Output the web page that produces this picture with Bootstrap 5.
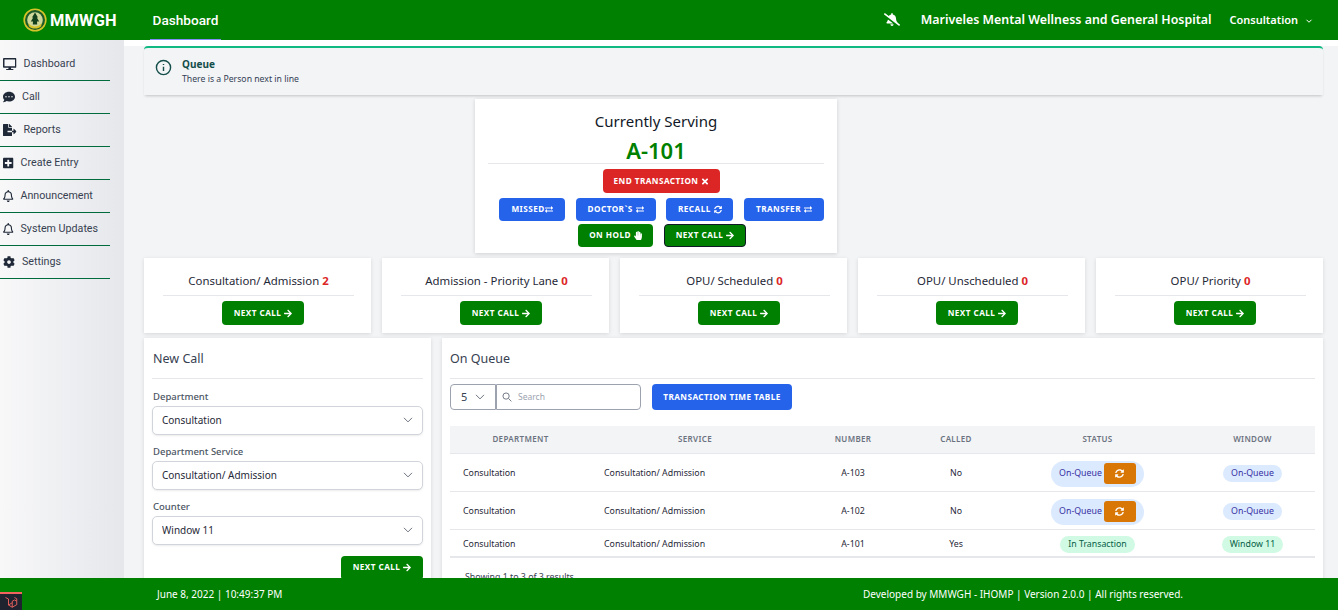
<!DOCTYPE html>
<html lang="en">
<head>
<meta charset="utf-8">
<title>MMWGH Queue</title>
<link rel="stylesheet" href="https://cdn.jsdelivr.net/npm/bootstrap@5.3.0/dist/css/bootstrap.min.css">
<style>
html,body{height:610px;overflow:hidden}
body{font-family:"Noto Sans","Open Sans",sans-serif;background:#fff;color:#111827;font-size:12px}
.topbar{height:40px;background:#008000;padding:0;flex:none;color:#fff;flex-wrap:nowrap}
.brandbox{display:flex;align-items:center;margin-left:23px;width:127px;gap:3px;font:700 16.4px Roboto,sans-serif;letter-spacing:.2px;color:#fff}
.toptab{font:500 13.6px Roboto,sans-serif;color:#fff;height:40px;width:71px;display:flex;align-items:center;justify-content:center;border-bottom:1px solid #818cf8;text-decoration:none}
.tophosp{font-weight:600;font-size:12.4px;margin-right:18px}
.topdept{font-weight:600;font-size:11px;margin-right:25px}
.bodywrap{flex:1 1 0;min-height:0}
.sideb{width:124px;flex:none;background:linear-gradient(to right,#f8f8f9,#e5e7eb);padding-top:8px;font-family:Roboto,sans-serif;font-size:10.7px;color:#374151}
.sideitem{display:flex;align-items:center;height:33px;width:110px;border-bottom:1px solid #006b3c;color:#374151;text-decoration:none;padding-left:3px}
.sideitem svg{height:12px;flex:none;fill:#1f2937}
.iw13{width:13.5px}.iw12{width:12px}.iw10{width:10.5px}
.sideitem span{margin-left:7px}
.mainarea{flex:1 1 0;min-width:0;background:linear-gradient(#fff 6px,#f3f4f6 6px);padding:6px 15px 0 20px;overflow:hidden}
.queuealert{height:49px;background:#f3f4f6;border-top:2px solid #10b981;border-radius:4px 4px 0 0;box-shadow:0 2px 3px -1px rgba(0,0,0,.2);display:flex;align-items:center;padding:0 11px 0;margin-bottom:4px;color:#134e4a}
.queuealert svg{width:17px;height:17px;flex:none;margin:0 10px 8px 0}
.alhead{font-size:10px;font-weight:700;line-height:14px}
.alsub{font-size:8.7px;line-height:14px;margin-top:1px;color:#334155}
.servecard{width:362px;height:154px;margin-left:331px;margin-bottom:5px;background:#fff;box-shadow:0 1px 4px rgba(0,0,0,.15);padding:12px 13px 0;border:0;border-radius:0}
.servetitle{font-size:15px;line-height:20px;text-align:center;color:#111827}
.servenum{font-size:22px;line-height:29px;font-weight:600;color:#008000;text-align:center;border-bottom:1px solid #e5e7eb;height:33px;padding-top:5px;box-sizing:border-box}
.actbtn{display:inline-flex;align-items:center;justify-content:center;gap:3px;border:1px solid transparent;border-radius:4px;color:#fff;font-size:8.2px;font-weight:700;letter-spacing:.45px;text-transform:uppercase;height:24px;padding:0;line-height:1;white-space:nowrap}
.actbtn svg{width:8px;height:9px;fill:#fff;flex:none}
.actbtn:hover{color:#fff}
.nogap{gap:0}
.bblue{background:#2563eb}
.bgreen{background:#008000}
.bred{background:#dc2626}
.borange{background:#d97706}
.bdark{border-color:#111827}
.servrow{display:flex;justify-content:center}
.w117{width:117px}
.servrow1{margin-top:5px;padding-left:11px}
.servrow2{margin-top:5px;justify-content:flex-end;gap:10.67px}
.servrow2 .actbtn,.servrow3 .actbtn{height:23px}
.servrow3{margin-top:3px;gap:11px;padding-left:12px}
.w66{width:66px}.w80{width:80px}.w67{width:67px}.w75{width:75px}.w82{width:82px}
.quegrid{display:grid;grid-template-columns:repeat(5,227px);gap:11px;margin-bottom:5px}
.quecard{height:75px;background:#fff;box-shadow:0 1px 4px rgba(0,0,0,.12);padding:13px 17px 0 19px;border:0;border-radius:0;align-items:center}
.quename{font-size:11.4px;line-height:19px;height:25px;width:100%;text-align:center;border-bottom:1px solid #e5e7eb;color:#1f2937;white-space:nowrap}
.quename b{color:#dc2626;font-weight:700}
.quecard .actbtn{margin-top:5px;margin-left:9px}
.lowergrid{display:flex;gap:11px}
.newcard{width:287px;flex:none;height:300px;background:#fff;box-shadow:0 1px 4px rgba(0,0,0,.12);padding:0 8px;border:0;border-radius:0}
.oncard{flex:1 1 0;min-width:0;height:300px;background:#fff;box-shadow:0 1px 4px rgba(0,0,0,.12);padding:0 8px;border:0;border-radius:0}
.cardhd{height:41px;line-height:41px;font-size:12.5px;color:#374151;border-bottom:1px solid #e5e7eb;padding-left:1px}
.oncard .cardhd{padding-left:0}
.fldlabel{font-size:9.5px;font-weight:500;color:#4b5563;line-height:13px;margin:11px 0 3px;padding-left:1px;display:block}
.fldlabel.tight{margin-top:10.5px}
.form-select.fldsel,.form-select.persel{background-image:url("data:image/svg+xml,%3csvg xmlns='http://www.w3.org/2000/svg' viewBox='0 0 16 16'%3e%3cpath fill='none' stroke='%236b7280' stroke-linecap='round' stroke-linejoin='round' stroke-width='1.6' d='M2 5l6 6 6-6'/%3e%3c/svg%3e")}
.fldsel.form-select{height:28.5px;font-size:10px;padding:0 9px;color:#1f2937;border-color:#d1d5db;border-radius:5px;box-shadow:0 1px 2px rgba(0,0,0,.08);background-size:10px 10px;background-position:right 9px center}
.nextwrap{display:flex;justify-content:flex-end;margin-top:11px}
.toolrow{display:flex;align-items:center;margin-top:5px;height:26px;gap:11px}
.pergrp{display:flex;width:191px;height:26px}
.persel.form-select{width:46px;height:26px;font-size:11px;padding:0 0 0 10px;border-radius:4px 0 0 4px;border-color:#9ca3af;color:#374151;background-size:10px 10px;background-position:right 10px center}
.searchbox{flex:1;display:flex;align-items:center;border:1px solid #9ca3af;border-radius:0 4px 4px 0;padding-left:5px;gap:6px;height:26px}
.searchbox svg{width:10px;height:10px;flex:none}
.searchbox input{border:0;outline:0;width:100px;font-size:8.5px;padding:0;background:transparent}
.searchbox input::placeholder{color:#9ca3af;opacity:1}
.ttbtn{width:140px;height:26px}
.qtable{width:865px;table-layout:fixed;margin:16px 0 0;font-size:8.8px;color:#1f2937;--bs-table-border-color:#e5e7eb}
.qtable th{background:#f3f4f6;height:27px;padding:0;text-align:center;font-size:8px;font-weight:600;letter-spacing:.35px;color:#6b7280;text-transform:uppercase;border-bottom:1px solid #e5e7eb;vertical-align:middle}
.qtable td{padding:3px 0 0;height:38px;vertical-align:middle;text-align:center;border-bottom:1px solid #e5e7eb;white-space:nowrap}
.qtable td.tl{text-align:left;padding-left:13px}
.qtable tr.shortrow td{height:28px;border-bottom:2px solid #e5e7eb}
.stpill{display:inline-flex;align-items:center;border-radius:999px;height:17px;padding:0 8px;font-size:8.8px;font-weight:400;line-height:1}
.stblue{background:#dbeafe;color:#3730a3}
.stgreen{background:#d1fae5;color:#065f46}
.stwrap{height:26px;padding:0 8px;gap:2px}
.syncbtn{width:32px;height:21px;border-radius:3px;display:inline-flex;align-items:center;justify-content:center;border:0;margin:0}
.syncbtn svg{width:9px;height:9px;fill:#fff}
.resulttxt{font-size:8.8px;color:#374151;padding:13px 0 0 15px;line-height:12px}
.foot{height:32px;flex:none;background:#008000;color:#fff;font-size:10px;display:flex;align-items:center;position:relative}
.footdate{margin-left:157px;width:706px}
.debugicon{position:absolute;left:0;bottom:0;width:22px;height:18px;background:#1f2330;border-top:2px solid #f4645f;display:flex;align-items:center;justify-content:center}
.debugicon svg{width:15px;height:14px}
</style>
</head>
<body class="d-flex flex-column">
<svg width="0" height="0" class="d-none">
<symbol id="i-arrow" viewBox="0 0 448 512"><path d="M190.5 66.9l22.2-22.2c9.4-9.4 24.6-9.4 33.9 0L441 239c9.4 9.4 9.4 24.6 0 33.9L246.6 467.3c-9.4 9.4-24.6 9.4-33.9 0l-22.2-22.2c-9.5-9.5-9.3-25 .4-34.3L311.4 296H24c-13.3 0-24-10.7-24-24v-32c0-13.3 10.7-24 24-24h287.4L190.9 101.2c-9.8-9.3-10-24.8-.4-34.3z"/></symbol>
<symbol id="i-times" viewBox="0 0 352 512"><path d="M242.72 256l100.07-100.07c12.28-12.28 12.28-32.19 0-44.48l-22.24-22.24c-12.28-12.28-32.19-12.28-44.48 0L176 189.28 75.93 89.21c-12.28-12.28-32.19-12.28-44.48 0L9.21 111.45c-12.28 12.28-12.28 32.19 0 44.48L109.28 256 9.21 356.07c-12.28 12.28-12.28 32.19 0 44.48l22.24 22.24c12.28 12.28 32.2 12.28 44.48 0L176 322.72l100.07 100.07c12.28 12.28 32.2 12.28 44.48 0l22.24-22.24c12.28-12.28 12.28-32.19 0-44.48L242.72 256z"/></symbol>
<symbol id="i-exch" viewBox="0 0 512 512"><path d="M0 168v-16c0-13.255 10.745-24 24-24h360V80c0-21.367 25.899-32.042 40.971-16.971l80 80c9.372 9.373 9.372 24.569 0 33.941l-80 80C409.956 271.982 384 261.456 384 240v-48H24c-13.255 0-24-10.745-24-24zm488 152H128v-48c0-21.314-25.862-32.08-40.971-16.971l-80 80c-9.372 9.373-9.372 24.569 0 33.941l80 80C102.057 463.997 128 453.437 128 432v-48h360c13.255 0 24-10.745 24-24v-16c0-13.255-10.745-24-24-24z"/></symbol>
<symbol id="i-sync" viewBox="0 0 512 512"><path d="M370.72 133.28C339.458 104.008 298.888 87.962 255.848 88c-77.458.068-144.328 53.178-162.791 126.85-1.344 5.363-6.122 9.15-11.651 9.15H24.103c-7.498 0-13.194-6.807-11.807-14.176C33.933 94.924 134.813 8 256 8c66.448 0 126.791 26.136 171.315 68.685L463.03 40.97C478.149 25.851 504 36.559 504 57.941V192c0 13.255-10.745 24-24 24H345.941c-21.382 0-32.09-25.851-16.971-40.971l41.75-41.749zM32 296h134.059c21.382 0 32.09 25.851 16.971 40.971l-41.75 41.75c31.262 29.273 71.835 45.319 114.876 45.28 77.418-.07 144.315-53.144 162.787-126.849 1.344-5.363 6.122-9.15 11.651-9.15h57.304c7.498 0 13.194 6.807 11.807 14.176C478.067 417.076 377.187 504 256 504c-66.448 0-126.791-26.136-171.315-68.685L48.97 471.03C33.851 486.149 8 475.441 8 454.059V320c0-13.255 10.745-24 24-24z"/></symbol>
<symbol id="i-hand" viewBox="0 0 448 512"><path d="M408.781 128.007C386.356 127.578 368 146.36 368 168.79V256h-8V79.79c0-22.43-18.356-41.212-40.781-40.783C297.488 39.423 280 57.169 280 79v177h-8V40.79C272 18.36 253.644-.422 231.219.007 209.488.423 192 18.169 192 40v216h-8V80.79c0-22.43-18.356-41.212-40.781-40.783C121.488 40.423 104 58.169 104 80v235.992l-31.648-43.519c-12.993-17.866-38.009-21.817-55.877-8.823-17.865 12.994-21.815 38.01-8.821 55.877l125.601 172.705A48 48 0 0 0 172.073 512h197.59c22.274 0 41.622-15.324 46.724-37.006l26.508-112.66a192.011 192.011 0 0 0 5.104-43.975V168c.001-21.831-17.487-39.577-39.218-39.993z"/></symbol>
<symbol id="i-desk" viewBox="0 0 576 512"><path d="M528 0H48C21.5 0 0 21.5 0 48v320c0 26.5 21.5 48 48 48h192l-16 48h-72c-13.3 0-24 10.7-24 24s10.7 24 24 24h272c13.3 0 24-10.7 24-24s-10.7-24-24-24h-72l-16-48h192c26.5 0 48-21.5 48-48V48c0-26.5-21.5-48-48-48zm-16 352H64V64h448v288z"/></symbol>
<symbol id="i-comm" viewBox="0 0 512 512"><path d="M256 32C114.6 32 0 125.1 0 240c0 49.6 21.4 95 57 130.7C44.5 421.1 2.7 466 2.2 466.5c-2.2 2.3-2.8 5.7-1.5 8.7S4.8 480 8 480c66.3 0 116-31.8 140.6-51.4 32.7 12.3 69 19.4 107.4 19.4 141.4 0 256-93.1 256-208S397.4 32 256 32zM128 272c-17.7 0-32-14.3-32-32s14.3-32 32-32 32 14.3 32 32-14.3 32-32 32zm128 0c-17.7 0-32-14.3-32-32s14.3-32 32-32 32 14.3 32 32-14.3 32-32 32zm128 0c-17.7 0-32-14.3-32-32s14.3-32 32-32 32 14.3 32 32-14.3 32-32 32z"/></symbol>
<symbol id="i-file" viewBox="0 0 576 512"><path d="M384 121.9c0-6.3-2.5-12.4-7-16.9L279.1 7c-4.5-4.5-10.6-7-17-7H256v128h128zM571 308l-95.7-96.4c-10.1-10.1-27.4-3-27.4 11.3V288h-64v64h64v65.2c0 14.3 17.3 21.4 27.4 11.3L571 332c6.6-6.6 6.6-17.4 0-24zm-379 28v-32c0-8.8 7.2-16 16-16h176V160H248c-13.2 0-24-10.8-24-24V0H24C10.7 0 0 10.7 0 24v464c0 13.3 10.7 24 24 24h336c13.3 0 24-10.7 24-24V352H208c-8.8 0-16-7.2-16-16z"/></symbol>
<symbol id="i-plus" viewBox="0 0 448 512"><path d="M400 32H48C21.5 32 0 53.5 0 80v352c0 26.5 21.5 48 48 48h352c26.5 0 48-21.5 48-48V80c0-26.5-21.5-48-48-48zm-32 252c0 6.6-5.4 12-12 12h-92v92c0 6.6-5.4 12-12 12h-56c-6.6 0-12-5.4-12-12v-92H92c-6.6 0-12-5.4-12-12v-56c0-6.6 5.4-12 12-12h92v-92c0-6.6 5.4-12 12-12h56c6.6 0 12 5.4 12 12v92h92c6.6 0 12 5.4 12 12v56z"/></symbol>
<symbol id="i-bell" viewBox="0 0 448 512"><path d="M439.39 362.29c-19.32-20.76-55.47-51.99-55.47-154.29 0-77.7-54.48-139.9-127.94-155.16V32c0-17.67-14.32-32-31.98-32s-31.98 14.33-31.98 32v20.84C118.56 68.1 64.08 130.3 64.08 208c0 102.3-36.15 133.53-55.47 154.29-6 6.45-8.66 14.16-8.61 21.71.11 16.4 12.98 32 32.1 32h383.8c19.12 0 32-15.6 32.1-32 .05-7.55-2.61-15.27-8.61-21.71zM67.53 368c21.22-27.97 44.42-74.33 44.53-159.42 0-.2-.06-.38-.06-.58 0-61.86 50.14-112 112-112s112 50.14 112 112c0 .2-.06.38-.06.58.11 85.1 23.31 131.46 44.53 159.42H67.53zM224 512c35.32 0 63.97-28.65 63.97-63.97H160.03C160.03 483.35 188.68 512 224 512z"/></symbol>
<symbol id="i-cog" viewBox="0 0 512 512"><path d="M487.4 315.7l-42.6-24.6c4.3-23.2 4.3-47 0-70.2l42.6-24.6c4.9-2.8 7.1-8.6 5.5-14-11.1-35.6-30-67.8-54.7-94.6-3.8-4.1-10-5.1-14.8-2.3L380.8 110c-17.9-15.4-38.5-27.3-60.8-35.1V25.8c0-5.6-3.9-10.5-9.4-11.7-36.7-8.2-74.3-7.8-109.2 0-5.5 1.2-9.4 6.1-9.4 11.7V75c-22.2 7.9-42.8 19.8-60.8 35.1L88.7 85.5c-4.9-2.8-11-1.9-14.8 2.3-24.7 26.7-43.6 58.9-54.7 94.6-1.7 5.4.6 11.2 5.5 14L67.3 221c-4.3 23.2-4.3 47 0 70.2l-42.6 24.6c-4.9 2.8-7.1 8.6-5.5 14 11.1 35.6 30 67.8 54.7 94.6 3.8 4.1 10 5.1 14.8 2.3l42.6-24.6c17.9 15.4 38.5 27.3 60.8 35.1v49.2c0 5.6 3.9 10.5 9.4 11.7 36.7 8.2 74.3 7.8 109.2 0 5.5-1.2 9.4-6.1 9.4-11.7v-49.2c22.2-7.9 42.8-19.8 60.8-35.1l42.6 24.6c4.9 2.8 11 1.9 14.8-2.3 24.7-26.7 43.6-58.9 54.7-94.6 1.5-5.5-.7-11.3-5.6-14.1zM256 336c-44.1 0-80-35.9-80-80s35.9-80 80-80 80 35.9 80 80-35.9 80-80 80z"/></symbol>
<symbol id="i-bellx" viewBox="0 0 640 512"><path d="M633.82 458.1l-90.62-70.05c.19-1.38.8-2.66.8-4.06.05-7.55-2.61-15.27-8.61-21.71-19.32-20.76-55.47-51.99-55.47-154.29 0-77.7-54.48-139.9-127.94-155.16V32c0-17.67-14.32-32-31.98-32s-31.98 14.33-31.98 32v20.84c-40.33 8.38-74.66 31.07-97.59 62.57L45.47 3.37C38.49-2.05 28.43-.8 23.01 6.18L3.37 31.45C-2.05 38.42-.8 48.47 6.18 53.9l588.35 454.73c6.98 5.43 17.03 4.17 22.46-2.81l19.64-25.27c5.42-6.97 4.17-17.02-2.81-22.45zM157.23 251.54c-8.61 67.96-36.41 93.33-52.62 110.75-6 6.45-8.66 14.16-8.61 21.71.11 16.4 12.98 32 32.1 32h241.92L157.23 251.54zM320 512c35.32 0 64-28.65 64-63.97H256c0 35.32 28.68 63.97 64 63.97z"/></symbol>
</svg>

<nav class="navbar topbar d-flex align-items-center">
  <div class="brandbox">
    <svg width="24" height="24" viewBox="0 0 24 24"><circle cx="12" cy="12" r="11.6" fill="#d6c528"/><circle cx="12" cy="12" r="10" fill="#1f5a2a"/><circle cx="12" cy="12" r="7.8" fill="#cfd89a"/><path d="M12 4.6l3 5 -1.2 0 2.4 4-2.2 0 .2 3h-4.4l.2-3-2.2 0 2.4-4-1.2 0z" fill="#143f1c"/><path d="M5.4 15c2 2.6 4.4 3.4 6.6 3.4s4.6-.8 6.6-3.4l-.4 3.2c-1.6 1.6-3.8 2.3-6.2 2.3s-4.6-.7-6.2-2.3z" fill="#d6c528"/></svg>
    <span>MMWGH</span>
  </div>
  <a class="toptab" href="#">Dashboard</a>
  <div class="ms-auto d-flex align-items-center">
    <svg width="16" height="13" fill="#fff" style="margin-right:21px"><use href="#i-bellx"/></svg>
    <span class="tophosp">Mariveles Mental Wellness and General Hospital</span>
    <span class="topdept">Consultation <svg width="8" height="8" viewBox="0 0 16 16" fill="none" stroke="#fff" stroke-width="2" class="ms-1"><path d="M3 5.5l5 5 5-5"/></svg></span>
  </div>
</nav>

<div class="d-flex bodywrap">
  <aside class="sideb">
    <a class="sideitem" href="#"><svg class="iw13"><use href="#i-desk"/></svg><span>Dashboard</span></a>
    <a class="sideitem" href="#"><svg class="iw12"><use href="#i-comm"/></svg><span>Call</span></a>
    <a class="sideitem" href="#"><svg class="iw13"><use href="#i-file"/></svg><span>Reports</span></a>
    <a class="sideitem" href="#"><svg class="iw10"><use href="#i-plus"/></svg><span>Create Entry</span></a>
    <a class="sideitem" href="#"><svg class="iw10"><use href="#i-bell"/></svg><span>Announcement</span></a>
    <a class="sideitem" href="#"><svg class="iw10"><use href="#i-bell"/></svg><span>System Updates</span></a>
    <a class="sideitem" href="#"><svg class="iw12"><use href="#i-cog"/></svg><span>Settings</span></a>
  </aside>

  <main class="mainarea">
    <div class="queuealert" role="alert">
      <svg viewBox="0 0 24 24" fill="none" stroke="#134e4a" stroke-width="2"><circle cx="12" cy="12" r="10"/><path d="M12 11v6M12 7v1.6"/></svg>
      <div><div class="alhead">Queue</div><div class="alsub">There is a Person next in line</div></div>
    </div>

    <div class="card servecard">
      <div class="servetitle">Currently Serving</div>
      <div class="servenum">A-101</div>
      <div class="servrow servrow1"><button class="btn actbtn bred w117">End Transaction <svg><use href="#i-times"/></svg></button></div>
      <div class="servrow servrow2">
        <button class="btn actbtn nogap bblue w66">Missed<svg><use href="#i-exch"/></svg></button>
        <button class="btn actbtn bblue w80">Doctor`s <svg><use href="#i-exch"/></svg></button>
        <button class="btn actbtn bblue w67">Recall <svg><use href="#i-sync"/></svg></button>
        <button class="btn actbtn bblue w80">Transfer <svg><use href="#i-exch"/></svg></button>
      </div>
      <div class="servrow servrow3">
        <button class="btn actbtn bgreen w75">On Hold <svg><use href="#i-hand"/></svg></button>
        <button class="btn actbtn bgreen bdark w82">Next Call <svg><use href="#i-arrow"/></svg></button>
      </div>
    </div>

    <div class="quegrid">
      <div class="card quecard"><div class="quename">Consultation/ Admission <b>2</b></div><button class="btn actbtn bgreen w82">Next Call <svg><use href="#i-arrow"/></svg></button></div>
      <div class="card quecard"><div class="quename">Admission - Priority Lane <b>0</b></div><button class="btn actbtn bgreen w82">Next Call <svg><use href="#i-arrow"/></svg></button></div>
      <div class="card quecard"><div class="quename">OPU/ Scheduled <b>0</b></div><button class="btn actbtn bgreen w82">Next Call <svg><use href="#i-arrow"/></svg></button></div>
      <div class="card quecard"><div class="quename">OPU/ Unscheduled <b>0</b></div><button class="btn actbtn bgreen w82">Next Call <svg><use href="#i-arrow"/></svg></button></div>
      <div class="card quecard"><div class="quename">OPU/ Priority <b>0</b></div><button class="btn actbtn bgreen w82">Next Call <svg><use href="#i-arrow"/></svg></button></div>
    </div>

    <div class="lowergrid">
      <div class="card newcard">
        <div class="cardhd">New Call</div>
        <label class="fldlabel">Department</label>
        <select class="form-select fldsel"><option>Consultation</option></select>
        <label class="fldlabel tight">Department Service</label>
        <select class="form-select fldsel"><option>Consultation/ Admission</option></select>
        <label class="fldlabel tight">Counter</label>
        <select class="form-select fldsel"><option>Window 11</option></select>
        <div class="nextwrap"><button class="btn actbtn bgreen w82">Next Call <svg><use href="#i-arrow"/></svg></button></div>
      </div>

      <div class="card oncard">
        <div class="cardhd">On Queue</div>
        <div class="toolrow">
          <div class="pergrp">
            <select class="form-select persel"><option>5</option></select>
            <div class="searchbox">
              <svg viewBox="0 0 16 16" fill="none" stroke="#6b7280" stroke-width="1.5"><circle cx="6.5" cy="6.5" r="5"/><path d="M10.5 10.5l4.5 4.5"/></svg>
              <input type="text" placeholder="Search">
            </div>
          </div>
          <button class="btn actbtn bblue ttbtn">Transaction Time Table</button>
        </div>
        <table class="table qtable">
          <colgroup><col style="width:141px"><col style="width:208px"><col style="width:108px"><col style="width:98px"><col style="width:185px"><col style="width:125px"></colgroup>
          <thead><tr><th>Department</th><th>Service</th><th>Number</th><th>Called</th><th>Status</th><th>Window</th></tr></thead>
          <tbody>
            <tr><td class="tl">Consultation</td><td class="tl">Consultation/ Admission</td><td>A-103</td><td>No</td><td><span class="stpill stblue stwrap">On-Queue <button class="btn actbtn borange syncbtn"><svg><use href="#i-sync"/></svg></button></span></td><td><span class="stpill stblue">On-Queue</span></td></tr>
            <tr><td class="tl">Consultation</td><td class="tl">Consultation/ Admission</td><td>A-102</td><td>No</td><td><span class="stpill stblue stwrap">On-Queue <button class="btn actbtn borange syncbtn"><svg><use href="#i-sync"/></svg></button></span></td><td><span class="stpill stblue">On-Queue</span></td></tr>
            <tr class="shortrow"><td class="tl">Consultation</td><td class="tl">Consultation/ Admission</td><td>A-101</td><td>Yes</td><td><span class="stpill stgreen">In Transaction</span></td><td><span class="stpill stgreen">Window 11</span></td></tr>
          </tbody>
        </table>
        <div class="resulttxt">Showing 1 to 3 of 3 results</div>
      </div>
    </div>
  </main>
</div>

<footer class="foot">
  <div class="footdate">June 8, 2022 | 10:49:37 PM</div>
  <div>Developed by MMWGH - IHOMP | Version 2.0.0 | All rights reserved.</div>
  <div class="debugicon"><svg viewBox="0 0 20 18" fill="none" stroke="#f4645f" stroke-width="1.2"><path d="M2 3l4 2v8l5 3 6-3.5V8l-3-1.7-3 1.7v3.5M6 13l5-3M11 16v-4.5M14 3l3 1.7V8"/></svg></div>
</footer>
</body>
</html>
